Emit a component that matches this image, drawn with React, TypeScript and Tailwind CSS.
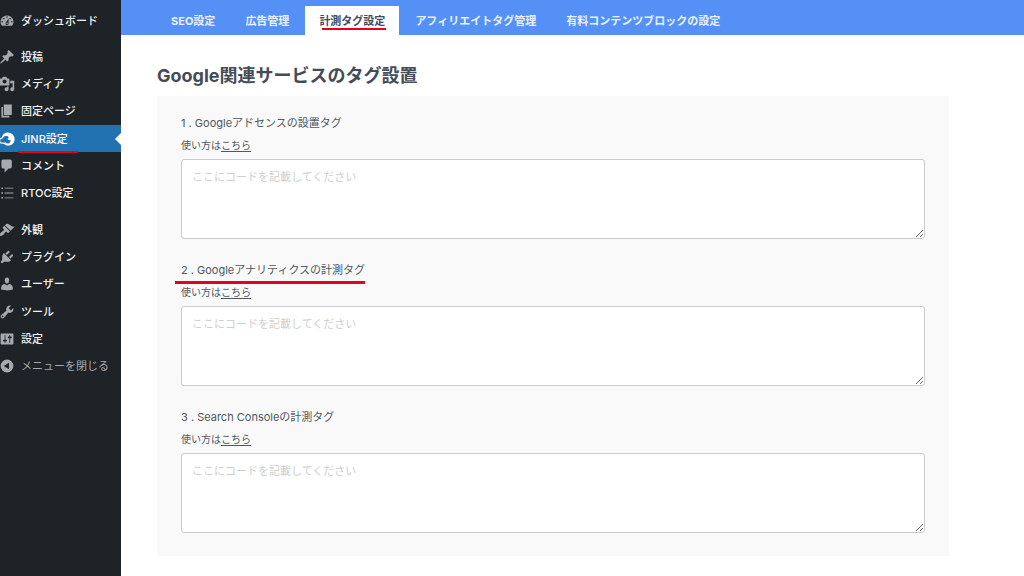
import React from "react";

const ICONS = {
  dashboard:
    "M3.76 16h12.48A7.998 7.998 0 0 0 10 3a7.998 7.998 0 0 0-6.24 13zM10 4c.55 0 1 .45 1 1s-.45 1-1 1-1-.45-1-1 .45-1 1-1zM6 6c.55 0 1 .45 1 1s-.45 1-1 1-1-.45-1-1 .45-1 1-1zm8 0c.55 0 1 .45 1 1s-.45 1-1 1-1-.45-1-1 .45-1 1-1zm-5.37 5.55L12 7v6c0 1.1-.9 2-2 2s-2-.9-2-2c0-.57.24-1.08.63-1.45zM4 10c.55 0 1 .45 1 1s-.45 1-1 1-1-.45-1-1 .45-1 1-1zm12 0c.55 0 1 .45 1 1s-.45 1-1 1-1-.45-1-1 .45-1 1-1zm-5 3c0-.55-.45-1-1-1s-1 .45-1 1 .45 1 1 1 1-.45 1-1z",
  pin: "M10.44 3.02l1.82-1.82 6.36 6.35-1.83 1.82c-1.05-.68-2.48-.57-3.41.36l-.75.75c-.92.93-1.04 2.35-.35 3.41l-1.83 1.82-2.41-2.41-2.8 2.79c-.42.42-3.38 2.71-3.8 2.29s1.86-3.39 2.28-3.81l2.79-2.79L4.1 9.36l1.83-1.82c1.05.69 2.48.57 3.4-.36l.75-.75c.93-.92 1.05-2.35.36-3.41z",
  media:
    "M13 11V4c0-.55-.45-1-1-1h-1.67L9 1H5L3.67 3H2c-.55 0-1 .45-1 1v7c0 .55.45 1 1 1h10c.55 0 1-.45 1-1zM7 4.5c1.38 0 2.5 1.12 2.5 2.5S8.38 9.5 7 9.5 4.5 8.38 4.5 7 5.62 4.5 7 4.5zM14 6h5v10.5c0 1.38-1.12 2.5-2.5 2.5S14 17.88 14 16.5s1.12-2.5 2.5-2.5c.17 0 .34.02.5.05V9h-3V6zm-4 8.05V13h2v3.5c0 1.38-1.12 2.5-2.5 2.5S7 17.88 7 16.5 8.12 14 9.5 14c.17 0 .34.02.5.05z",
  page: "M6 15V2h10v13H6zm-1 1h8v2H3V5h2v11z",
  cloud:
    "M0 12.200C0 9.800 1.500 8.300 3.500 8.100 4.300 4.300 7.300 2 11 2c4.900 0 8.500 3.700 8.500 8.300 0 4.500-3.300 7.900-7.800 7.900-2.300 0-4.200-.9-5.500-2.400H3.500C1.500 15.800 0 14.400 0 12.200zM1.500 12.200c0 1.400.9 2.200 2.200 2.200h4.500c1.200 1.300 2.900 1.500 4.200.9 1.700-.8 2.400-2.700 1.600-4.300-.9.9-2.400.7-2.900-.4-.5-1.100.1-2.200 1.200-2.500C10.900 5.900 5.700 5.300 4.800 9.500c-1.900-.2-3.300.9-3.300 2.700z",
  comment:
    "M5 2h9c1.1 0 2 .9 2 2v7c0 1.1-.9 2-2 2h-2l-5 5v-5H5c-1.1 0-2-.9-2-2V4c0-1.1.9-2 2-2z",
  list: "M3 3h2v2H3zM7 3.500h11v1H7zM3 9h2v2H3zM7 9.500h11v1H7zM3 15h2v2H3zM7 15.500h11v1H7z",
  brush:
    "M14.48 11.06L7.41 3.99l1.5-1.5c.5-.56 2.3-.47 3.51.32 1.21.8 1.43 1.28 2.91 2.1 1.18.64 2.45 1.26 4.45.85zm-.71.71L6.7 4.7 4.93 6.47c-.39.39-.39 1.02 0 1.41l1.06 1.06c.39.39.39 1.03 0 1.42-.6.6-1.43 1.11-2.21 1.69-.35.26-.7.53-1.01.84C1.43 14.23.4 16.08 1.4 17.07c.99 1 2.84-.03 4.18-1.36.31-.31.58-.66.85-1.02.57-.78 1.08-1.61 1.69-2.21.39-.39 1.02-.39 1.41 0l1.06 1.06c.39.39 1.02.39 1.41 0z",
  plug: "M13.11 4.36L9.87 7.6 8 5.73l3.24-3.24c.35-.34 1.05-.2 1.56.32.52.51.66 1.21.31 1.55zm-8 1.77l.91-1.12 9.01 9.01-1.19.84c-.71.71-2.63 1.16-3.82 1.16H6.14L4.9 17.26c-.59.59-1.54.59-2.12 0-.59-.58-.59-1.53 0-2.12l1.24-1.24v-3.88c0-1.13.4-3.19 1.09-3.89zm7.26 3.97l3.24-3.24c.34-.35 1.04-.21 1.55.31.52.51.66 1.21.31 1.55l-3.24 3.25z",
  user: "M10 9.25c-2.27 0-2.73-3.44-2.73-3.44C7 4.02 7.82 2 9.97 2c2.16 0 2.98 2.02 2.71 3.81 0 0-.41 3.44-2.68 3.44zm0 2.57L12.72 10c2.39 0 4.52 2.33 4.52 4.53v2.49s-3.65 1.13-7.24 1.13c-3.65 0-7.24-1.13-7.24-1.13v-2.49c0-2.25 1.94-4.48 4.47-4.48z",
  wrench:
    "M16.68 9.77c-1.34 1.34-3.3 1.67-4.95.99l-5.41 6.52c-.99.99-2.59.99-3.58 0s-.99-2.59 0-3.57l6.52-5.42c-.68-1.65-.35-3.61.99-4.95 1.28-1.28 3.12-1.62 4.72-1.06l-2.89 2.89 2.82 2.82 2.86-2.87c.53 1.58.18 3.39-1.08 4.65zM3.81 16.21c.4.39 1.04.39 1.43 0 .4-.4.4-1.04 0-1.43-.39-.4-1.03-.4-1.43 0-.39.39-.39 1.03 0 1.43z",
  sliders:
    "M18 16V4c0-.55-.45-1-1-1H3c-.55 0-1 .45-1 1v12c0 .55.45 1 1 1h14c.55 0 1-.45 1-1zM8 11h1c.55 0 1 .45 1 1s-.45 1-1 1H8v1.5c0 .28-.22.5-.5.5s-.5-.22-.5-.5V13H6c-.55 0-1-.45-1-1s.45-1 1-1h1V5.5c0-.28.22-.5.5-.5s.5.22.5.5V11zm5-2h-1c-.55 0-1-.45-1-1s.45-1 1-1h1V5.5c0-.28.22-.5.5-.5s.5.22.5.5V7h1c.55 0 1 .45 1 1s-.45 1-1 1h-1v5.5c0 .28-.22.5-.5.5s-.5-.22-.5-.5V9z",
  collapse:
    "M10 2a8 8 0 1 0 0 16 8 8 0 0 0 0-16zM12.500 5.800v8.400L6 10z",
};

type IconName = keyof typeof ICONS;
type MenuItem = { icon: IconName; label: string; active?: boolean; muted?: boolean };

const MENU: MenuItem[][] = [
  [{ icon: "dashboard", label: "ダッシュボード" }],
  [
    { icon: "pin", label: "投稿" },
    { icon: "media", label: "メディア" },
    { icon: "page", label: "固定ページ" },
    { icon: "cloud", label: "JINR設定", active: true },
    { icon: "comment", label: "コメント" },
    { icon: "list", label: "RTOC設定" },
  ],
  [
    { icon: "brush", label: "外観" },
    { icon: "plug", label: "プラグイン" },
    { icon: "user", label: "ユーザー" },
    { icon: "wrench", label: "ツール" },
    { icon: "sliders", label: "設定" },
    { icon: "collapse", label: "メニューを閉じる", muted: true },
  ],
];

const GROUP_LAYOUT = ["h-[27px] grid-rows-1", "h-[164px] grid-rows-6", "h-[164px] grid-rows-6"];

const TABS = [
  { label: "SEO設定" },
  { label: "広告管理" },
  { label: "計測タグ設定", active: true },
  { label: "アフィリエイトタグ管理" },
  { label: "有料コンテンツブロックの設定" },
];

const FIELDS = [
  { id: "adsense", label: "1 . Googleアドセンスの設置タグ" },
  { id: "analytics", label: "2 . Googleアナリティクスの計測タグ", marked: true },
  { id: "search-console", label: "3 . Search Consoleの計測タグ" },
];

function Icon({ name }: { name: IconName }) {
  return (
    <svg viewBox="0 0 20 20" className="size-4 shrink-0 fill-current" aria-hidden="true">
      <path fillRule="evenodd" d={ICONS[name]} />
    </svg>
  );
}

function MenuLink({ item }: { item: MenuItem }) {
  const tone = item.active
    ? "bg-[#2271b1] text-white font-medium"
    : item.muted
      ? "text-[#a7aaad]"
      : "text-[#f0f0f1] font-medium";
  return (
    <a href="#" className={`relative flex items-center gap-1.5 whitespace-nowrap ${tone}`}>
      <span className={`-ml-px ${item.active ? "text-white" : "text-[#a7aaad]"}`}>
        <Icon name={item.icon} />
      </span>
      {item.label}
      {item.active && (
        <>
          <span className="absolute -bottom-px left-[18px] h-[2px] w-[60px] bg-[#e60020]" />
          <span className="absolute right-0 top-1/2 -translate-y-1/2 border-y-6 border-r-6 border-y-transparent border-r-white" />
        </>
      )}
    </a>
  );
}

function Sidebar() {
  return (
    <nav className="flex w-[121px] shrink-0 flex-col gap-[9px] bg-[#1d2327] py-[7px] text-[11px] leading-4">
      {MENU.map((group, i) => (
        <div key={i} className={`grid ${GROUP_LAYOUT[i]}`}>
          {group.map((item) => (
            <MenuLink key={item.label} item={item} />
          ))}
        </div>
      ))}
    </nav>
  );
}

function TabBar() {
  return (
    <nav className="flex gap-0.5 bg-[#5590f7] pl-9 pt-1.5 text-[11px] font-bold leading-4">
      {TABS.map((tab) => (
        <a
          key={tab.label}
          href="#"
          className={`relative flex h-[29px] items-center whitespace-nowrap px-3.5 ${
            tab.active ? "bg-white text-[#434c57]" : "text-[#e8f1ff]"
          }`}
        >
          {tab.label}
          {tab.active && (
            <span className="absolute bottom-[5px] left-[17px] right-[13px] h-[2px] bg-[#e60020]" />
          )}
        </a>
      ))}
    </nav>
  );
}

function CodeField({ id, label, marked }: { id: string; label: string; marked?: boolean }) {
  return (
    <div className="flex flex-col">
      <div className="flex">
        <label htmlFor={id} className="relative text-[11px] leading-[22px]">
          {label}
          {marked && (
            <span className="absolute -bottom-[3px] -left-1.5 right-0 h-[3px] bg-[#e60020]" />
          )}
        </label>
      </div>
      <p className="mb-[3px] text-[10px] leading-[22px]">
        使い方は
        <a href="#" className="underline underline-offset-2">
          こちら
        </a>
      </p>
      <textarea
        id={id}
        placeholder="ここにコードを記載してください"
        className="block h-20 w-full resize-y rounded-[3px] border border-[#c9cbce] bg-white px-2.5 py-2 text-[11px] leading-[18px] placeholder:text-[#cfcfcf]"
      />
    </div>
  );
}

export default function App() {
  return (
    <div className="flex min-h-screen bg-white font-['Inter','Noto_Sans_CJK_JP',sans-serif] text-[#50575e]">
      <Sidebar />
      <div className="min-w-0 flex-1">
        <TabBar />
        <main className="pl-9 pr-[75px]">
          <h1 className="pt-7 pb-[7px] text-[18px] font-bold leading-[26px] text-[#434c57]">
            Google関連サービスのタグ設置
          </h1>
          <form className="flex flex-col gap-5 bg-[#f9f9f9] px-6 pt-4 pb-[23px]">
            {FIELDS.map((field) => (
              <CodeField key={field.id} {...field} />
            ))}
          </form>
        </main>
      </div>
    </div>
  );
}
